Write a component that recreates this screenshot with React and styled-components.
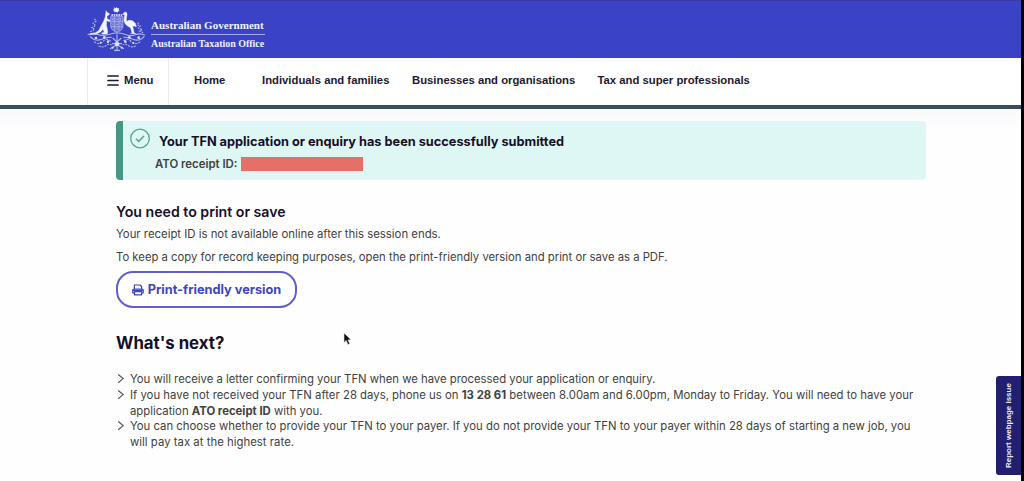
import React from "react";
import styled, { createGlobalStyle } from "styled-components";

const GlobalStyle = createGlobalStyle`
  * { box-sizing: border-box; }
  body { margin: 0; background: #fefefe; }
  h1, h2, h3, p, ul { margin: 0; padding: 0; }
`;

const Page = styled.div`
  position: relative;
  width: 1024px;
  height: 481px;
  overflow: hidden;
  background: #fefefe;
  border-right: 3px solid #000;
  font-family: Inter, "Liberation Sans", sans-serif;
  color: #414141;
`;

const Header = styled.header`
  display: flex;
  height: 58px;
  padding: 2px 0 0 80px;
  background: #3a43c6;
  border-top: 1px solid #3d3aa8;
`;

const CrestSvg = styled.svg`
  display: block;
  width: 75px;
  height: 54px;
  margin-top: -1px;
  flex: none;
`;

const Wordmark = styled.div`
  display: flex;
  flex-direction: column;
  width: 114px;
  margin: 14px 0 0 -4px;
  font-family: "Liberation Serif", serif;
  font-weight: 700;
  color: #f1f2ff;
  white-space: nowrap;
`;

const WordLine = styled.span`
  height: 17px;
  line-height: 17px;
  font-size: ${(p) => p.$size}px;
`;

const WordRule = styled.hr`
  width: 114px;
  height: 1px;
  margin: 0;
  border: 0;
  background: #a5a9ea;
`;

const Nav = styled.nav`
  display: flex;
  height: 51px;
  padding-left: 87px;
  background: #fff;
  border-bottom: 4px solid #3a4d5a;
  font-family: "Liberation Sans", Arial, sans-serif;
  font-size: 11.3px;
  font-weight: 700;
  color: #1d1930;
`;

const MenuButton = styled.div`
  display: flex;
  align-items: center;
  width: 82px;
  padding: 0 0 3px 19px;
  gap: 5px;
  border: solid #ebebee;
  border-width: 0 1px;
`;

const NavItem = styled.a`
  display: flex;
  align-items: center;
  width: ${(p) => p.$width}px;
  padding-bottom: 3px;
  white-space: nowrap;
  flex: none;
`;

const NavLinks = styled.div`
  display: flex;
  padding-left: 25px;
`;

const Main = styled.main`
  padding: 12px 0 0 116px;
  background: linear-gradient(#f8f9fb, #fefefe 24px);
`;

const Alert = styled.section`
  display: flex;
  width: 810px;
  height: 59px;
  padding: 7px 0 0 7px;
  background: #dff7f4;
  border-left: 7px solid #469783;
  border-radius: 4px;
`;

const AlertText = styled.div`
  display: flex;
  flex-direction: column;
  padding-left: 5px;
`;

const AlertTitle = styled.h1`
  padding: 4px 0 0 4px;
  font-size: 12.75px;
  line-height: 19px;
  font-weight: 700;
  color: #150f2b;
  white-space: nowrap;
`;

const Receipt = styled.p`
  display: flex;
  align-items: center;
  height: 14px;
  margin-top: 6px;
  font-size: 11.4px;
  font-weight: 600;
  white-space: nowrap;
`;

const ReceiptLabel = styled.span`
  width: 86px;
`;

const Redaction = styled.span`
  width: 122px;
  height: 14px;
  background: #e57068;
`;

const SectionTitle = styled.h2`
  margin-top: 21px;
  font-size: 14.15px;
  line-height: 22px;
  font-weight: 600;
  color: #150f2b;
`;

const Paragraph = styled.p`
  height: 22.5px;
  font-size: ${(p) => p.$size}px;
  line-height: 22px;
  white-space: nowrap;
`;

const PrintButton = styled.button`
  display: flex;
  align-items: center;
  justify-content: center;
  gap: 4px;
  width: 181px;
  height: 37px;
  margin: 3px 0 0;
  padding: 0;
  border: 2px solid #5f60cf;
  border-radius: 17px;
  background: #fff;
  color: #4144c0;
  font: 700 12.75px Inter, sans-serif;
  white-space: nowrap;
`;

const NextTitle = styled.h2`
  margin-top: 23px;
  font-size: 16.8px;
  line-height: 24px;
  font-weight: 700;
  color: #150f2b;
`;

const StepList = styled.ul`
  margin-top: 17.4px;
  list-style: none;
`;

const Step = styled.li`
  display: flex;
  font-size: 11.33px;
  line-height: 15.6px;
  white-space: nowrap;
`;

const StepMark = styled.svg`
  width: 8px;
  height: 10px;
  margin: 2px 5px 0 1px;
  flex: none;
`;

const StepLine = styled.span`
  display: block;
  letter-spacing: ${(p) => p.$track || 0}px;
`;

const ReportTab = styled.aside`
  position: absolute;
  right: 0;
  top: 376px;
  display: flex;
  align-items: center;
  justify-content: center;
  width: 25px;
  height: 99px;
  border-radius: 0 3px 3px 0;
  background: #221f70;
  color: #e8e8f6;
  font: 700 8px "Liberation Sans", Arial, sans-serif;
  writing-mode: vertical-rl;
  transform: rotate(180deg);
  white-space: nowrap;
`;

const Pointer = styled.svg`
  position: absolute;
  left: 343px;
  top: 332px;
  width: 9px;
  height: 14px;
`;

const Crest = () => (
  <CrestSvg viewBox="0 0 225 162" fill="#f4f5ff" stroke="none">
    <circle cx="110" cy="24" r="6" />
    <path d="M110 15l2 5 6-2-3 5 4 4-6 1-1 5-4-4-5 2 0-5-5-2 5-3-1-5 5 3z" />
    <path d="M94 39h32" stroke="#f4f5ff" strokeWidth="4" strokeDasharray="5 2" />
    <path d="M78 26l3 5 7 4-1 4-6 2 0 9 9 5-1 4-9-3-1 14 3 12 1 10-2 4h-15l-1-3 8-2-4-9-8 8-12 6-19 2 0-3 17-3 10-7 6-13 7-12 6-15 1-9 1-6z" stroke="#f4f5ff" strokeWidth="1.5" />
    <path d="M129 35l6-5 5 2 1 6-2 11 1 10 6-4 11 1 9 8 3 10-6-2-5 1 2 9 2 10 5 3h-15l4-3-4-15-8-4-8-7-4-10 1-12 1-7-6 1z" stroke="#f4f5ff" strokeWidth="1.5" />
    <path d="M92 44h37v27q0 14-18 20-19-6-19-20z" fill="#a7acec" opacity=".45" />
    <g fill="none" stroke="#cbd0f5" strokeWidth="2.5" opacity=".7">
      <path d="M92 44h37v27q0 14-18 20-19-6-19-20zM92 59h37M92 74h36M104 44v42M117 44v42" />
      <path d="M96 49l5 6m0-6l-5 6M108 52h6M122 49v7M96 64l5 6M108 67h6M121 64l5 6M109 80h5" />
    </g>
    <g fill="none" stroke="#d9dcfa" strokeWidth="3.4" opacity=".75">
      <path d="M23 98q18-5 33 0t33-1q22-8 45 0 17 7 32 1t29 2" />
      <path d="M44 50l4 8-9 6 8 7-12 6 9 5-13 7M176 62l-4 6 9 4-6 6 12 5-9 4 12 5" strokeDasharray="5 3" />
      <path d="M30 103q16 17 35 9t30-6M193 103q-15 17-34 9t-29-6" />
      <path d="M42 119q15 12 27-1t24 1M181 119q-16 12-28-1t-24 1" strokeDasharray="7 3" />
      <path d="M56 132q14 6 23-2t18 1M167 132q-14 6-23-2t-18 1" strokeDasharray="6 3" />
      <path d="M111 97v51M98 108l13 12 13-12M90 140l21-12 21 12M96 125h30M102 145h18" />
    </g>
    <g fill="#e7e9fd" opacity=".9">
      <circle cx="48" cy="108" r="4" /><circle cx="73" cy="106" r="4" />
      <circle cx="62" cy="122" r="3" /><circle cx="84" cy="119" r="4" />
      <circle cx="148" cy="106" r="4" /><circle cx="176" cy="107" r="4" />
      <circle cx="160" cy="123" r="3" /><circle cx="136" cy="119" r="4" />
      <circle cx="111" cy="126" r="7" /><circle cx="98" cy="137" r="3" /><circle cx="125" cy="137" r="3" />
    </g>
  </CrestSvg>
);

const Bullet = () => (
  <StepMark viewBox="0 0 8 10" fill="none" stroke="#555" strokeWidth="1.15">
    <path d="M1.2 .5L6.2 4.6 1.2 8.7" />
  </StepMark>
);

export default function App() {
  return (
    <Page>
      <GlobalStyle />
      <Header>
        <Crest />
        <Wordmark>
          <WordLine $size={11.05}>Australian Government</WordLine>
          <WordRule />
          <WordLine $size={9.95}>Australian Taxation Office</WordLine>
        </Wordmark>
      </Header>
      <Nav>
        <MenuButton>
          <svg width="12" height="12" viewBox="0 0 12 12" stroke="#1d1930" strokeWidth="1.7" strokeLinecap="round">
            <path d="M1 2h10M1 6.5h10M1 11h10" />
          </svg>
          Menu
        </MenuButton>
        <NavLinks>
          <NavItem $width={68}>Home</NavItem>
          <NavItem $width={150}>Individuals and families</NavItem>
          <NavItem $width={185.5}>Businesses and organisations</NavItem>
          <NavItem $width={160}>Tax and super professionals</NavItem>
        </NavLinks>
      </Nav>
      <Main>
        <Alert>
          <svg width="20" height="22" viewBox="0 0 20 22" fill="none" stroke="#55a691" strokeWidth="1.3">
            <circle cx="10" cy="10.5" r="9.3" />
            <path d="M6 10.7l2.7 2.7 5.3-5.4" strokeWidth="1.5" />
          </svg>
          <AlertText>
            <AlertTitle>Your TFN application or enquiry has been successfully submitted</AlertTitle>
            <Receipt><ReceiptLabel>ATO receipt ID:</ReceiptLabel><Redaction /></Receipt>
          </AlertText>
        </Alert>
        <SectionTitle>You need to print or save</SectionTitle>
        <Paragraph $size={11.36}>Your receipt ID is not available online after this session ends.</Paragraph>
        <Paragraph $size={11.31}>To keep a copy for record keeping purposes, open the print-friendly version and print or save as a PDF.</Paragraph>
        <PrintButton>
          <svg width="12" height="12" viewBox="0 0 12 12" fill="none" stroke="#4144c0" strokeWidth="1.2" strokeLinejoin="round">
            <path d="M2.4 5V1h5.6l1.6 1.5V5" />
            <path d="M2.4 8.8H.7V6.3Q.7 5 2 5h8q1.3 0 1.3 1.3v2.5H9.6" />
            <path d="M2.4 7.6h7.2v3.2H2.4z" fill="#fff" />
            <path d="M1 6.2h10" strokeWidth="1.6" />
          </svg>
          Print-friendly version
        </PrintButton>
        <NextTitle>What's next?</NextTitle>
        <StepList>
          <Step>
            <Bullet />
            <StepLine $track={-0.01}>You will receive a letter confirming your TFN when we have processed your application or enquiry.</StepLine>
          </Step>
          <Step>
            <Bullet />
            <div>
              <StepLine $track={0.013}>If you have not received your TFN after 28 days, phone us on <b>13 28 61</b> between 8.00am and 6.00pm, Monday to Friday. You will need to have your</StepLine>
              <StepLine>application <b>ATO receipt ID</b> with you.</StepLine>
            </div>
          </Step>
          <Step>
            <Bullet />
            <div>
              <StepLine $track={0.006}>You can choose whether to provide your TFN to your payer. If you do not provide your TFN to your payer within 28 days of starting a new job, you</StepLine>
              <StepLine $track={0.03}>will pay tax at the highest rate.</StepLine>
            </div>
          </Step>
        </StepList>
      </Main>
      <ReportTab>Report webpage issue</ReportTab>
      <Pointer viewBox="0 0 9 14">
        <path d="M1 1v9.5l2.2-2 1.7 4 1.8-.8-1.7-3.8 3-.2z" fill="#111" stroke="#ddd" strokeWidth=".6" />
      </Pointer>
    </Page>
  );
}
